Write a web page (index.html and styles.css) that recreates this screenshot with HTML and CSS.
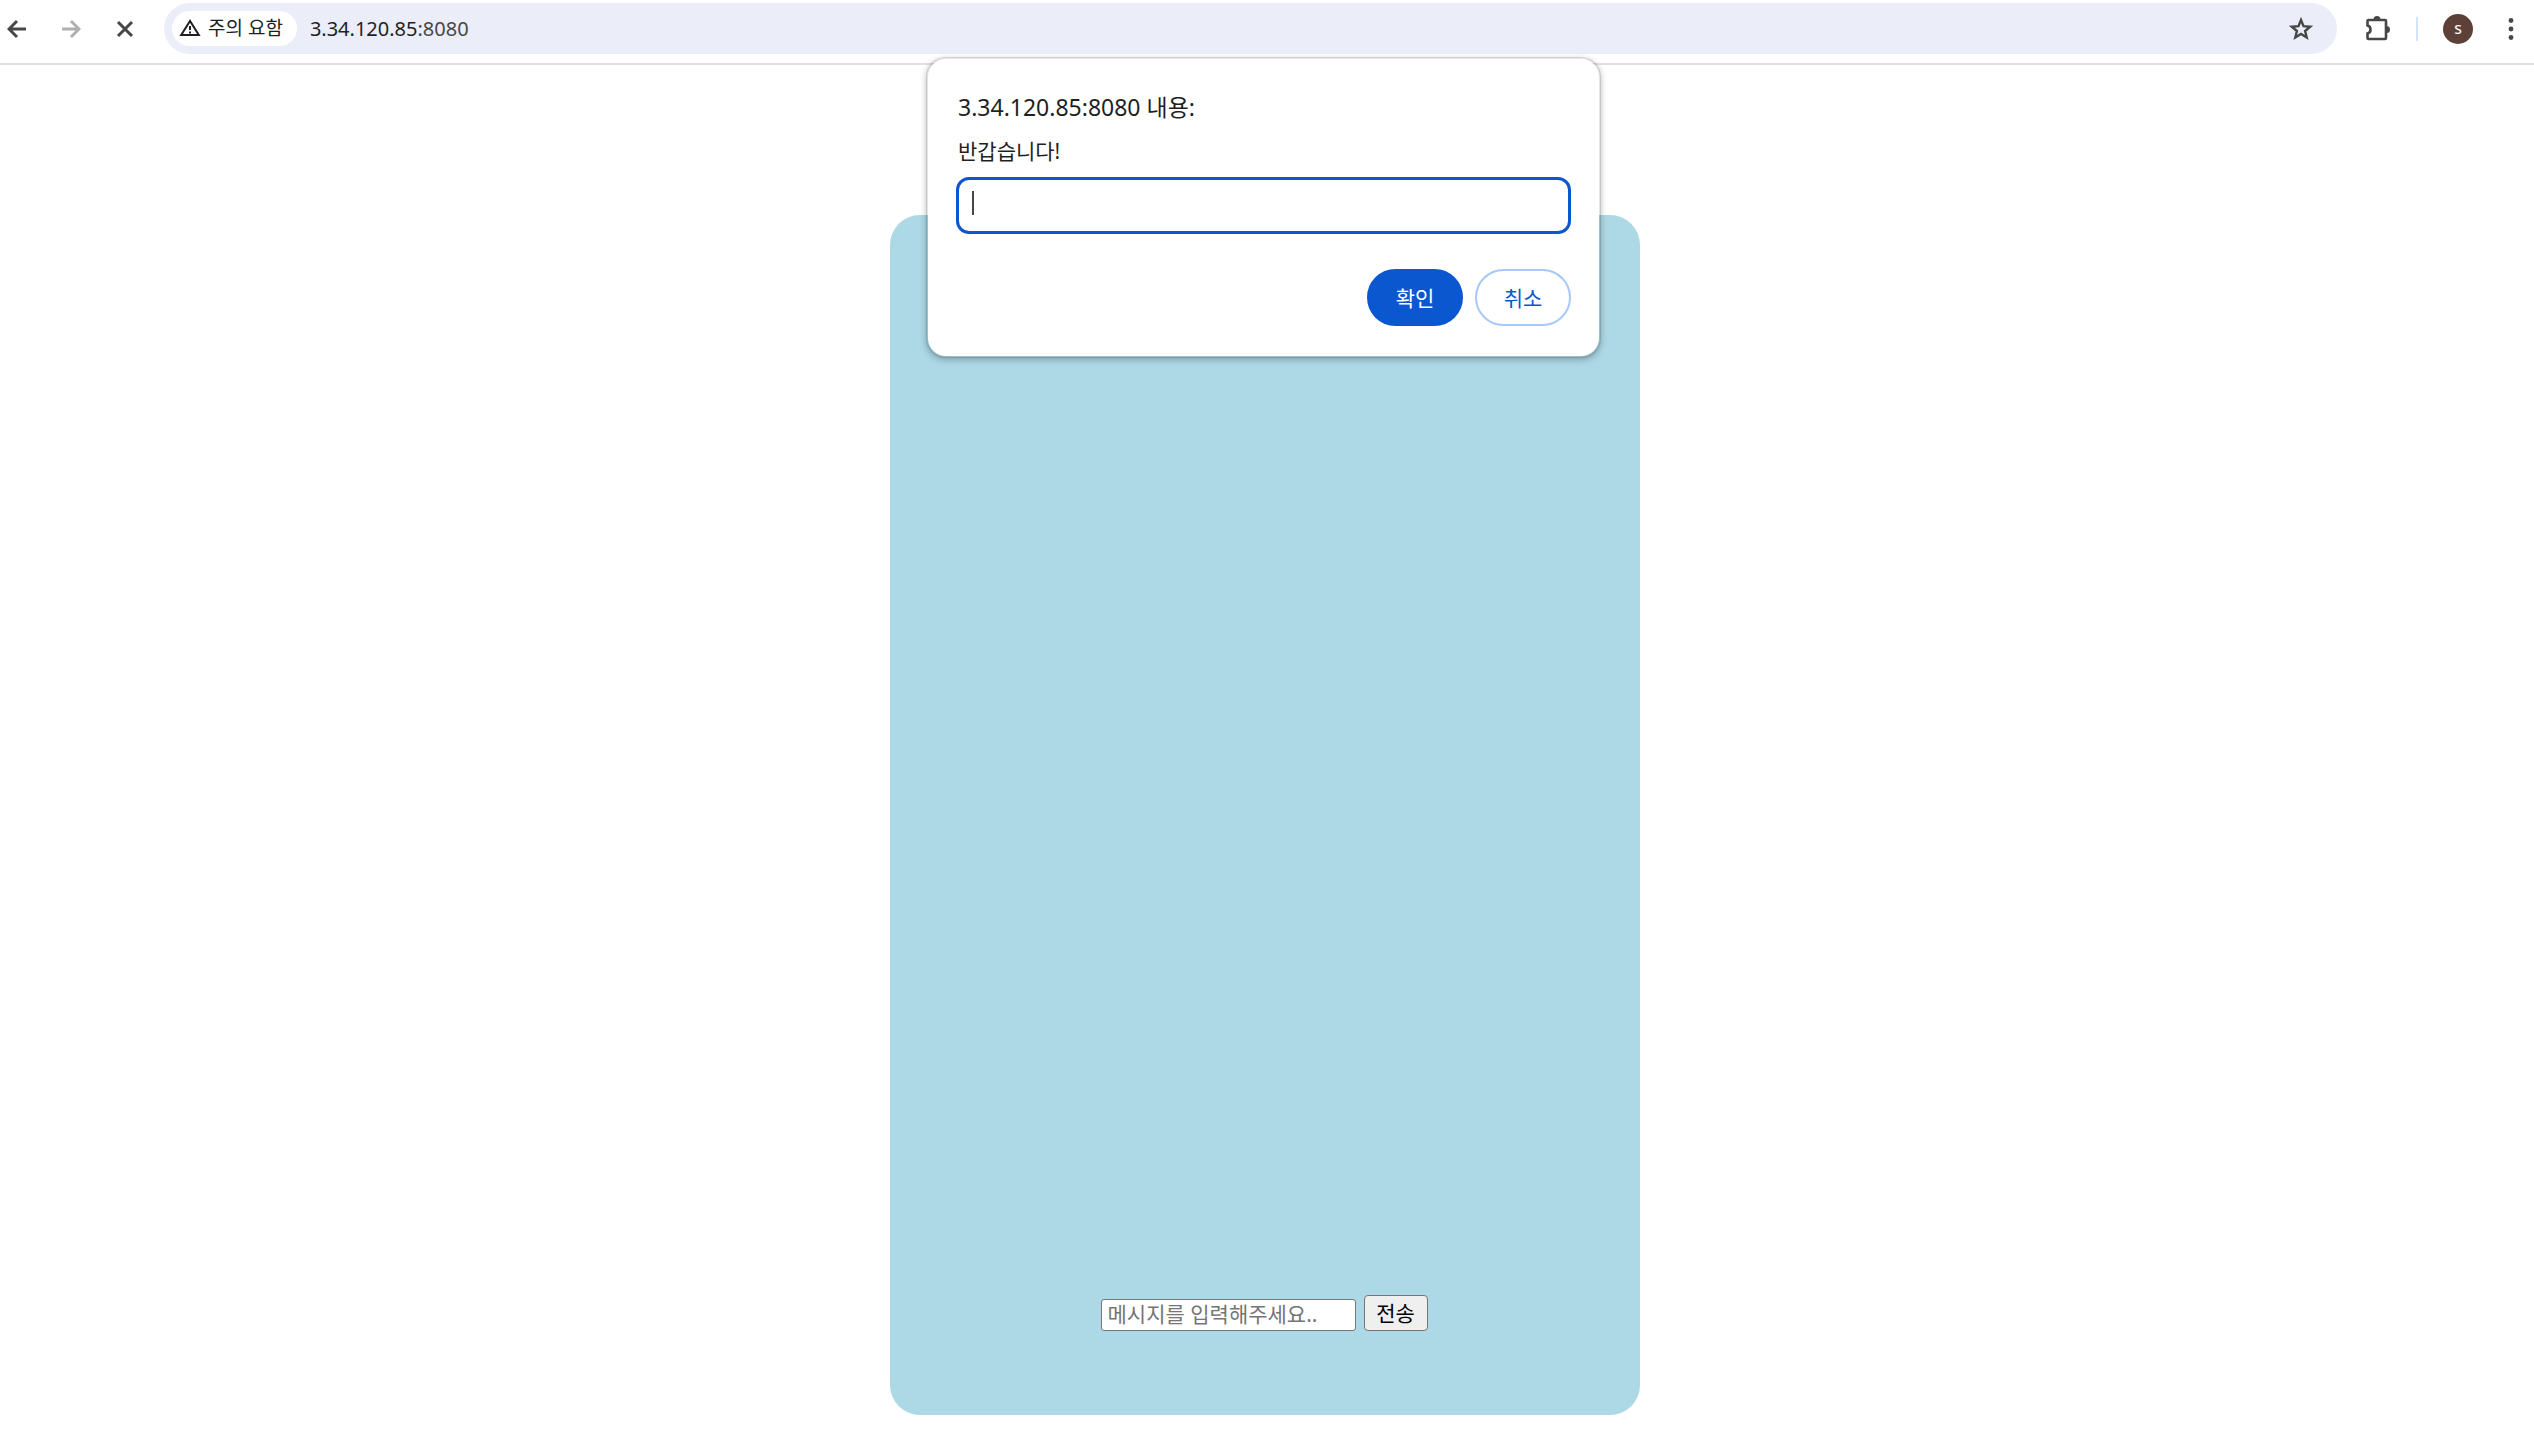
FILE: index.html
```html
<!DOCTYPE html>
<html lang="ko">

<head>
  <meta charset="UTF-8">
  <meta name="viewport" content="width=device-width, initial-scale=1.0">
  <title>3.34.120.85:8080</title>
  <link rel="stylesheet" href="styles.css">
</head>

<body>
  <header class="toolbar">
    <nav class="nav">
      <button class="iconBtn" type="button" aria-label="뒤로">
        <svg width="20" height="20" viewBox="0 0 20 20"><path d="M19 10H2.500M10 2L2 10l8 8" /></svg>
      </button>
      <button class="iconBtn disabled" type="button" aria-label="앞으로" disabled>
        <svg width="20" height="20" viewBox="0 0 20 20"><path d="M1 10h16.500M10 2l8 8-8 8" /></svg>
      </button>
      <button class="iconBtn" type="button" aria-label="중지">
        <svg width="20" height="20" viewBox="0 0 20 20"><path d="M3 3l14 14M17 3L3 17" /></svg>
      </button>
    </nav>
    <div class="omnibox">
      <button class="chip" type="button">
        <svg width="22" height="20" viewBox="0 0 22 20">
          <path d="M11 3L2.200 17h17.600z" stroke-width="2" />
          <path d="M11 8v4M11 13.500v2" stroke-width="2" />
        </svg>
        주의 요함
      </button>
      <div class="url">3.34.120.85<span class="port">:8080</span></div>
      <button class="iconBtn" type="button" aria-label="북마크">
        <svg width="26" height="26" viewBox="0 0 26 26"><path class="star"
            d="M13 4l2.500 6.200 6.700.500-5.100 4.300 1.600 6.500L13 18l-5.700 3.500 1.600-6.500-5.100-4.300 6.700-.5z" /></svg>
      </button>
    </div>
    <div class="tools">
      <button class="iconBtn" type="button" aria-label="확장 프로그램">
        <svg width="28" height="28" viewBox="0 0 28 28">
          <path d="M4.500 5h16.500q1 0 1 1v17q0 1-1 1H4.500q-1 0-1-1v-4.500q3-.8 3-4t-3-4V6q0-1 1-1z" stroke-width="2.600" />
          <path class="fill" d="M9.500 4.500a3.500 3.500 0 0 1 7 0zM22.500 11a3.500 3.500 0 0 1 0 7z" />
        </svg>
      </button>
      <span class="divider"></span>
      <button class="iconBtn profile" type="button" aria-label="프로필"><span class="avatar">s</span></button>
      <button class="iconBtn" type="button" aria-label="메뉴">
        <svg width="24" height="24" viewBox="0 0 24 24">
          <g class="fill">
            <circle cx="12" cy="3.500" r="2.400" />
            <circle cx="12" cy="12" r="2.400" />
            <circle cx="12" cy="20.500" r="2.400" />
          </g>
        </svg>
      </button>
    </div>
  </header>

  <main class="page">
    <div class="chat">
      <form class="sendForm">
        <input class="message" type="text" placeholder="메시지를 입력해주세요.." aria-label="메시지">
        <button class="send" type="button">전송</button>
      </form>
    </div>
  </main>

  <!-- prompt -->
  <div class="prompt" role="dialog" aria-labelledby="promptTitle">
    <h1 class="promptTitle" id="promptTitle">3.34.120.85:8080 내용:</h1>
    <label class="promptText" for="nickname">반갑습니다!</label>
    <div class="promptField">
      <input class="promptInput" id="nickname" type="text">
      <span class="caret"></span>
    </div>
    <div class="promptBtns">
      <button class="btn ok" type="button">확인</button>
      <button class="btn" type="button">취소</button>
    </div>
  </div>
</body>

</html>
```
FILE: styles.css
```css
* {
  margin: 0;
  padding: 0;
  box-sizing: border-box;
}
body {
  min-height: 100vh;
  position: relative;
  background: #fff;
  color: #1f1f1f;
  font-family: "Noto Sans", "Noto Sans CJK KR", sans-serif;
}
button,
input {
  font-family: inherit;
}
svg {
  display: block;
  fill: none;
  stroke: currentColor;
  stroke-width: 3;
}
.fill {
  fill: currentColor;
  stroke: none;
}

/* toolbar */
.toolbar {
  display: flex;
  align-items: center;
  padding: 3px 6px 9px 0;
  border-bottom: 2px solid #e1e1e1;
}
.nav {
  display: flex;
  gap: 20px;
  margin-right: 22px;
}
.iconBtn {
  width: 34px;
  height: 34px;
  display: flex;
  align-items: center;
  justify-content: center;
  border: none;
  background: none;
  color: #474747;
}
.iconBtn.disabled {
  color: #b0b0b0;
}
.iconBtn.profile {
  justify-content: flex-end;
}
.omnibox {
  flex: 1;
  height: 51px;
  display: flex;
  align-items: center;
  gap: 13px;
  padding: 0 19px 0 8px;
  border-radius: 26px;
  background: #ebeef8;
}
.chip {
  height: 35px;
  display: flex;
  align-items: center;
  gap: 7px;
  padding: 0 14px 2px 7px;
  border: none;
  border-radius: 18px;
  background: #fff;
  color: #1f1f1f;
  font-size: 19px;
  line-height: 24px;
}
.url {
  flex: 1;
  font-size: 20px;
  line-height: 28px;
}
.port {
  color: #474747;
}
.star {
  stroke-width: 2.4;
}
.tools {
  display: flex;
  align-items: center;
  gap: 21px;
  margin-left: 24px;
}
.divider {
  width: 2px;
  height: 24px;
  background: #d3e3fd;
}
.avatar {
  width: 30px;
  height: 30px;
  flex: none;
  border-radius: 50%;
  background: #5d4037;
  color: #fff;
  font-size: 16px;
  line-height: 28px;
  text-align: center;
}

/* chat */
.page {
  padding: 150px 4px 40px 0;
}
.chat {
  width: 750px;
  height: 1200px;
  margin: 0 auto;
  padding: 0 2px 84px 0;
  display: flex;
  flex-direction: column;
  justify-content: flex-end;
  border-radius: 30px;
  background: lightblue;
}
.sendForm {
  display: flex;
  justify-content: center;
  align-items: flex-end;
  gap: 8px;
}
.message {
  width: 255px;
  height: 32px;
  padding: 0 6px 2px;
  border: 1px solid #767676;
  border-radius: 3px;
  background: #fff;
  font-size: 21px;
}
.message::placeholder {
  color: #757575;
}
.send {
  width: 64px;
  height: 36px;
  border: 1px solid #767676;
  border-radius: 4px;
  background: #efefef;
  color: #000;
  font-size: 21px;
  line-height: 32px;
}

/* prompt */
.prompt {
  width: 675px;
  position: absolute;
  top: 57px;
  left: 50%;
  margin-left: -341px;
  padding: 30px 28px;
  border: 2px solid rgba(0, 0, 0, 0.1);
  border-radius: 20px;
  background: #fff;
  background-clip: padding-box;
  box-shadow: 0 2px 6px rgba(0, 0, 0, 0.25);
}
.promptTitle {
  padding-left: 2px;
  font-size: 23px;
  font-weight: 400;
  line-height: 36px;
}
.promptText {
  display: block;
  padding: 10px 2px;
  font-size: 21px;
  line-height: 32px;
}
.promptField {
  position: relative;
}
.promptInput {
  width: 100%;
  height: 57px;
  display: block;
  padding: 0 16px;
  border: 3px solid #0b57d0;
  border-radius: 13px;
  outline: none;
  background: #fff;
  font-size: 21px;
}
.caret {
  position: absolute;
  top: 14px;
  left: 16px;
  width: 2px;
  height: 24px;
  background: #474747;
}
.promptBtns {
  display: flex;
  justify-content: flex-end;
  gap: 12px;
  margin-top: 35px;
}
.btn {
  width: 96px;
  height: 57px;
  padding-bottom: 2px;
  border: 2px solid #a8c7fa;
  border-radius: 29px;
  background: #fff;
  color: #0b57d0;
  font-size: 21px;
}
.btn.ok {
  border-color: #0b57d0;
  background: #0b57d0;
  color: #fff;
}
```
